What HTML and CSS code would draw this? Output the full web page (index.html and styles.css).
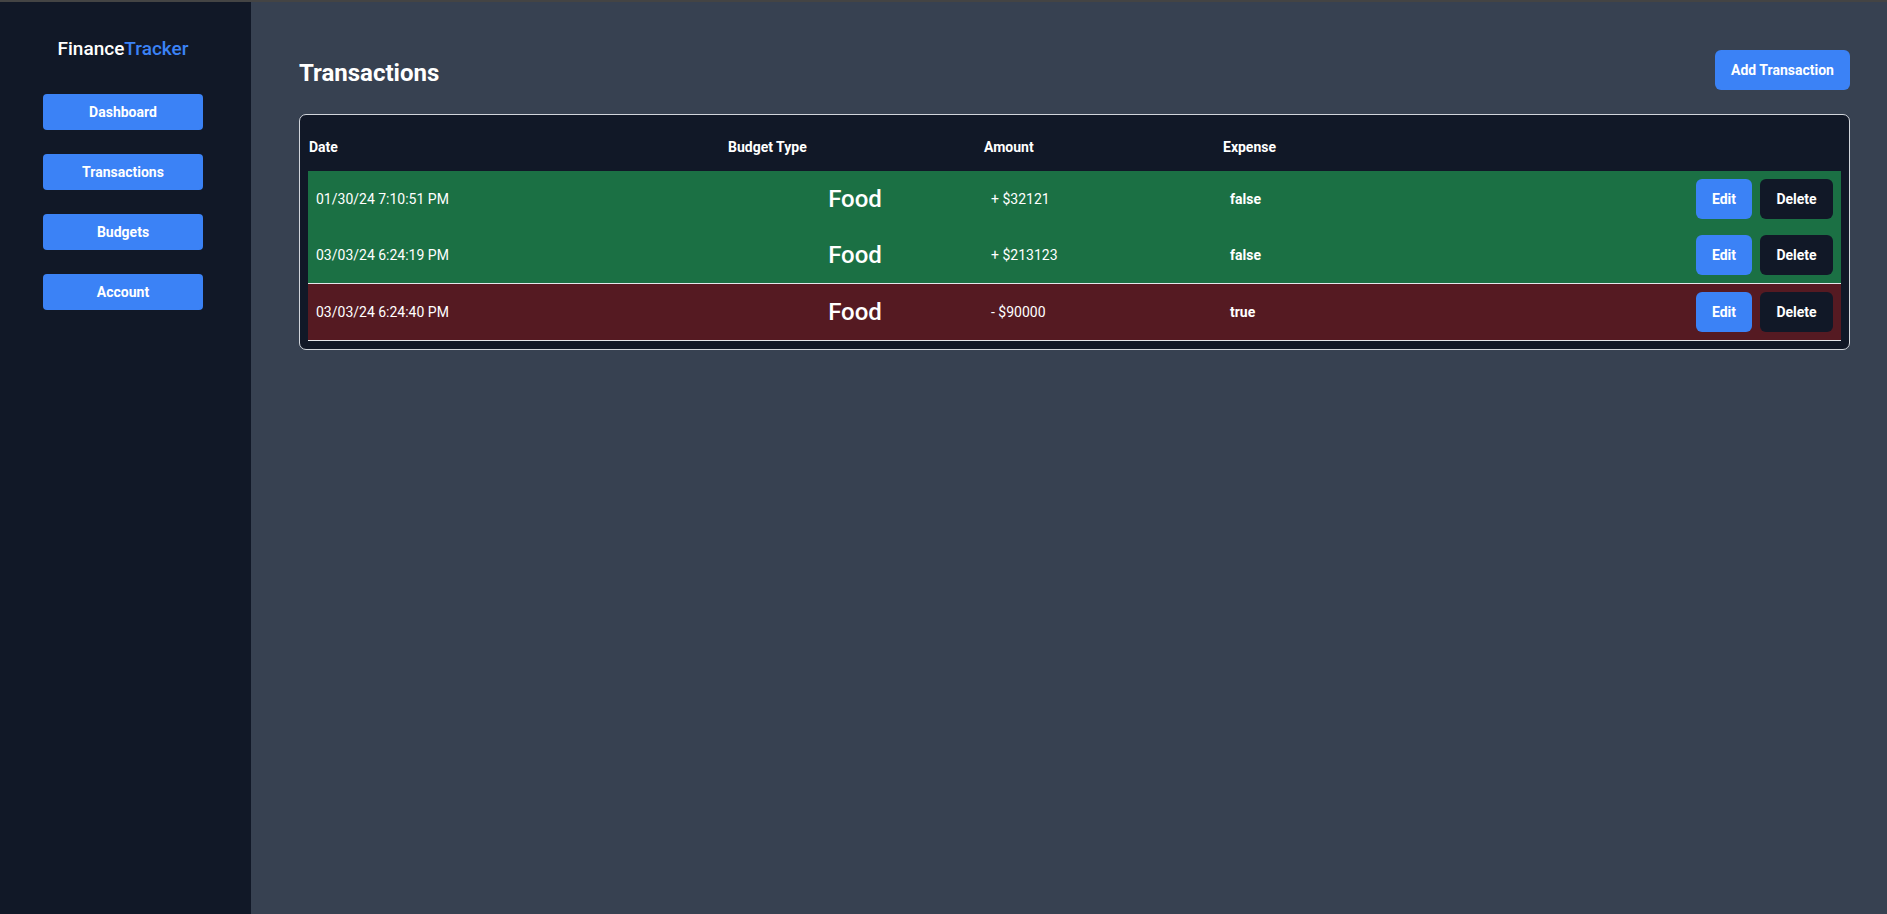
FILE: index.html
```html
<!DOCTYPE html>
<html lang="en">
<head>
<meta charset="utf-8">
<title>FinanceTracker</title>
<link rel="stylesheet" href="styles.css">
</head>
<body>
<div class="topbar"></div>
<div class="app">
  <aside class="sidebar">
    <div class="logo"><span class="logo-a">Finance</span><span class="logo-b">Tracker</span></div>
    <nav class="nav">
      <a class="nav-btn">Dashboard</a>
      <a class="nav-btn">Transactions</a>
      <a class="nav-btn">Budgets</a>
      <a class="nav-btn">Account</a>
    </nav>
  </aside>
  <main class="main">
    <div class="page-head">
      <h1 class="page-title">Transactions</h1>
      <button class="btn btn-add">Add Transaction</button>
    </div>
    <div class="table-box">
      <div class="grid thead">
        <div class="th">Date</div>
        <div class="th">Budget Type</div>
        <div class="th">Amount</div>
        <div class="th">Expense</div>
        <div class="th"></div>
      </div>
      <div class="grid trow income">
        <div class="td td-date">01/30/24 7:10:51 PM</div>
        <div class="td td-type">Food</div>
        <div class="td td-amt">+ $32121</div>
        <div class="td td-exp">false</div>
        <div class="td td-act"><button class="btn btn-edit">Edit</button><button class="btn btn-del">Delete</button></div>
      </div>
      <div class="grid trow income lined">
        <div class="td td-date">03/03/24 6:24:19 PM</div>
        <div class="td td-type">Food</div>
        <div class="td td-amt">+ $213123</div>
        <div class="td td-exp">false</div>
        <div class="td td-act"><button class="btn btn-edit">Edit</button><button class="btn btn-del">Delete</button></div>
      </div>
      <div class="grid trow expense lined">
        <div class="td td-date">03/03/24 6:24:40 PM</div>
        <div class="td td-type">Food</div>
        <div class="td td-amt">- $90000</div>
        <div class="td td-exp">true</div>
        <div class="td td-act"><button class="btn btn-edit">Edit</button><button class="btn btn-del">Delete</button></div>
      </div>
    </div>
  </main>
</div>
</body>
</html>
```
FILE: styles.css
```css
* { box-sizing: border-box; }
html, body { margin: 0; padding: 0; }
body {
  height: 914px;
  overflow: hidden;
  background: #374151;
  font-family: "Segoe UI", Roboto, "Noto Sans", sans-serif;
  color: #ffffff;
}
.topbar { height: 2px; background: #444444; }
.app { display: flex; height: 912px; }
.sidebar {
  width: 251px;
  flex: none;
  background: #111827;
  padding: 33px 0 0 43px;
}
.logo {
  width: 160px;
  text-align: center;
  font-size: 19px;
  line-height: 28px;
  font-weight: 500;
}
.logo-a { color: #ffffff; }
.logo-b { color: #3b82f6; }
.nav {
  display: flex;
  flex-direction: column;
  gap: 24px;
  margin-top: 31px;
}
.nav-btn {
  display: flex;
  align-items: center;
  justify-content: center;
  width: 160px;
  height: 36px;
  background: #3b82f6;
  border-radius: 4px;
  color: #ffffff;
  font-size: 14px;
  font-weight: 700;
}
.main {
  flex: 1;
  padding: 48px 37px 0 48px;
}
.page-head {
  display: flex;
  align-items: center;
  justify-content: space-between;
  height: 40px;
}
.page-title {
  margin: 0;
  padding-top: 5px;
  font-size: 24px;
  line-height: 32px;
  font-weight: 700;
}
.btn {
  border: none;
  color: #ffffff;
  font-family: inherit;
  font-size: 14px;
  font-weight: 700;
  height: 40px;
  border-radius: 6px;
  padding: 0 16px;
}
.btn-add { background: #3b82f6; width: 135px; padding: 0; }
.table-box {
  margin-top: 24px;
  background: #111827;
  border: 1px solid #d1d5db;
  border-radius: 7px;
  padding: 8px;
}
.grid {
  display: grid;
  grid-template-columns: 419px 256px 239px 1fr 145px;
  align-items: center;
}
.thead { height: 48px; }
.th {
  font-size: 14px;
  font-weight: 700;
  padding-left: 1px;
}
.trow { height: 56px; }
.trow.lined { height: 57px; border-bottom: 1px solid #e5e7eb; }
.income { background: #1b7044; }
.expense { background: #551a22; }
.td { font-size: 14px; }
.td-date { padding-left: 8px; }
.td-type { text-align: center; font-size: 24px; font-weight: 500; }
.td-amt { padding-left: 8px; }
.td-exp { padding-left: 8px; font-weight: 700; }
.td-act {
  display: flex;
  justify-content: flex-end;
  gap: 8px;
  padding-right: 8px;
}
.btn-edit { background: #3b82f6; width: 56px; padding: 0; }
.btn-del { background: #111827; width: 73px; padding: 0; }
```
